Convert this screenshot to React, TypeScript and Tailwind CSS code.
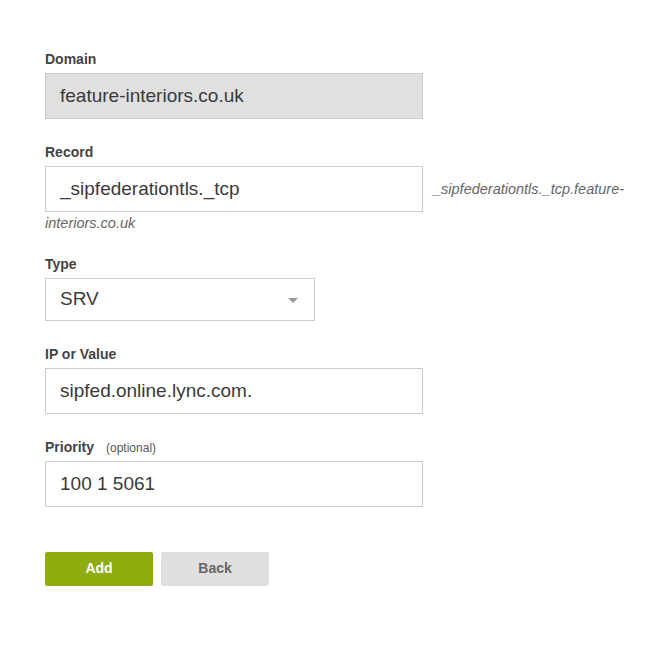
import React from 'react';

const labelCls = "block text-[14px] leading-[20px] font-bold text-[#444] mb-[4px]";
const inputCls =
  "w-[378px] h-[46px] border border-[#cccccc] px-[14px] text-[19px] text-[#3a3a3a] outline-none";

export default function App() {
  return (
    <div
      className="bg-white min-h-[672px] pt-[49px] pl-[45px]"
      style={{ fontFamily: '"Liberation Sans", Arial, sans-serif' }}
    >
      <form className="w-[590px]" onSubmit={e => e.preventDefault()}>
        <div className="mb-[23px]">
          <label className={labelCls}>Domain</label>
          <input
            className={`${inputCls} bg-[#e0e0e0]`}
            value="feature-interiors.co.uk"
            readOnly
          />
        </div>

        <div className="mb-[21px]">
          <label className={labelCls}>Record</label>
          <div className="leading-[20px]">
            <input
              className={`${inputCls} bg-white inline-block align-middle`}
              defaultValue="_sipfederationtls._tcp"
            />
            <span className="ml-[10px] text-[14.5px] italic text-[#666] align-middle">
              _sipfederationtls._tcp.feature-interiors.co.uk
            </span>
          </div>
        </div>

        <div className="mb-[23px]">
          <label className={labelCls}>Type</label>
          <div className="relative w-[270px] h-[43px] border border-[#cccccc] bg-white flex items-center px-[14px]">
            <span className="text-[19px] text-[#3a3a3a]">SRV</span>
            <span className="absolute right-[16px] top-[19px] w-0 h-0 border-l-[5px] border-r-[5px] border-t-[5px] border-l-transparent border-r-transparent border-t-[#999]" />
          </div>
        </div>

        <div className="mb-[23px]">
          <label className={labelCls}>IP or Value</label>
          <input className={`${inputCls} bg-white`} defaultValue="sipfed.online.lync.com." />
        </div>

        <div className="mb-[45px]">
          <label className={`${labelCls} h-[20px]`}>
            Priority
            <span className="ml-[12px] text-[12px] leading-[20px] font-normal text-[#555]">(optional)</span>
          </label>
          <input className={`${inputCls} bg-white`} defaultValue="100 1 5061" />
        </div>

        <div className="flex gap-[8px]">
          <button className="w-[108px] h-[34px] rounded-[2px] bg-[#8fac0e] text-white text-[14px] font-bold">
            Add
          </button>
          <button className="w-[108px] h-[34px] rounded-[2px] bg-[#e0dfde] text-[#666] text-[14px] font-bold">
            Back
          </button>
        </div>
      </form>
    </div>
  );
}
